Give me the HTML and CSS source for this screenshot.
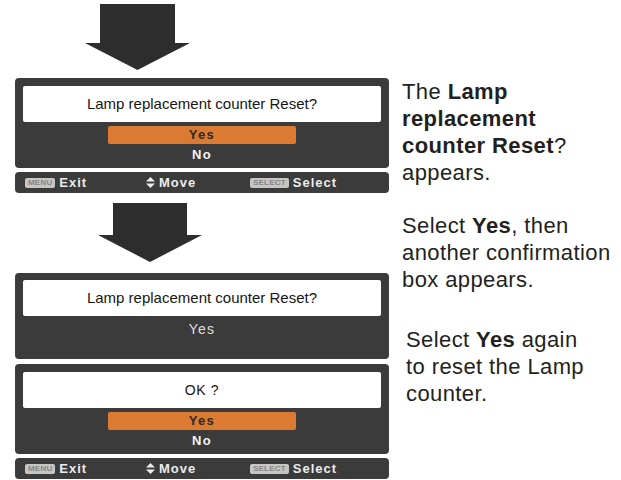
FILE: index.html
```html
<!DOCTYPE html>
<html>
<head>
  <meta name="viewport" content="width=device-width, initial-scale=1.0">
  <link rel="stylesheet" href="styles.css">
</head>

<body>
  <div class="page">
    <div class="steps">
      <svg class="arrow first" width="105" height="66" viewBox="0 0 105 66">
        <polygon points="15,0 90,0 90,39 105,39 52.5,66 0,39 15,39" />
      </svg>

      <div class="panel">
        <div class="msg">Lamp replacement counter Reset?</div>
        <div class="opts">
          <div class="opt on">Yes</div>
          <div class="opt">No</div>
        </div>
      </div>

      <div class="guide">
        <div class="g-item"><span class="key">MENU</span>Exit</div>
        <div class="g-item">
          <svg class="updown" width="9" height="11" viewBox="0 0 9 11">
            <polygon points="4.5,0 9,4.6 0,4.6" />
            <polygon points="0,6.4 9,6.4 4.5,11" />
          </svg>Move
        </div>
        <div class="g-item"><span class="key">SELECT</span>Select</div>
      </div>

      <svg class="arrow second" width="104" height="59" viewBox="0 0 104 59">
        <polygon points="15,0 89,0 89,32 104,32 52,59 0,32 15,32" />
      </svg>

      <div class="panel tall">
        <div class="msg">Lamp replacement counter Reset?</div>
        <div class="opts">
          <div class="opt plain">Yes</div>
        </div>
      </div>

      <div class="panel next">
        <div class="msg ok">OK ?</div>
        <div class="opts">
          <div class="opt on">Yes</div>
          <div class="opt">No</div>
        </div>
      </div>

      <div class="guide">
        <div class="g-item"><span class="key">MENU</span>Exit</div>
        <div class="g-item">
          <svg class="updown" width="9" height="11" viewBox="0 0 9 11">
            <polygon points="4.5,0 9,4.6 0,4.6" />
            <polygon points="0,6.4 9,6.4 4.5,11" />
          </svg>Move
        </div>
        <div class="g-item"><span class="key">SELECT</span>Select</div>
      </div>
    </div>

    <div class="notes">
      <p>The <b>Lamp<br>replacement<br>counter Reset</b>?<br>appears.</p>
      <p class="second">Select <b>Yes</b>, then<br>another confirmation<br>box appears.</p>
      <p class="third">Select <b>Yes</b> again<br>to reset the Lamp<br>counter.</p>
    </div>
  </div>
</body>
</html>
```

FILE: styles.css
```css
body {
  margin: 0;
  background-color: #ffffff;
}

.page {
  display: flex;
}

.steps {
  width: 390px;
  padding-top: 4px;
}

.arrow {
  display: block;
  fill: #2d2d2d;
}

.arrow.first {
  margin-left: 85px;
}

.arrow.second {
  margin-top: 10px;
  margin-left: 98px;
}

.panel {
  margin-left: 15px;
  width: 374px;
  box-sizing: border-box;
  padding: 8px 8px 4px;
  background-color: #3b3b3b;
  border-radius: 4px;
  margin-top: 8px;
}

.panel.tall {
  margin-top: 11px;
  padding-top: 7px;
  padding-bottom: 21px;
}

.panel.next {
  margin-top: 5px;
}

.msg {
  height: 36px;
  line-height: 36px;
  background-color: #ffffff;
  border-radius: 2px;
  text-align: center;
  font-family: "Liberation Sans", Arial, sans-serif;
  font-size: 15px;
  color: #161616;
}

.msg.ok {
  font-size: 14px;
  letter-spacing: 0.6px;
}

.opts {
  margin-top: 4px;
  display: flex;
  flex-direction: column;
  gap: 2px;
}

.opt {
  width: 188px;
  height: 18px;
  line-height: 18px;
  margin: 0 auto;
  text-align: center;
  font-family: "Liberation Sans", Arial, sans-serif;
  font-weight: bold;
  font-size: 13px;
  letter-spacing: 1.3px;
  color: #f2f2f2;
  border-radius: 2px;
}

.opt.on {
  background-color: #dc7a32;
  color: #2a2a2a;
}

.opt.plain {
  font-weight: normal;
  font-size: 14px;
  color: #dedede;
}

.guide {
  margin: 4px 0 0 15px;
  width: 374px;
  height: 21px;
  box-sizing: border-box;
  padding-left: 10px;
  background-color: #3b3b3b;
  border-radius: 4px;
  display: grid;
  grid-template-columns: 121px 104px 1fr;
  align-items: center;
  font-family: "Liberation Sans", Arial, sans-serif;
  font-weight: bold;
  font-size: 13px;
  letter-spacing: 1px;
  color: #ececec;
}

.g-item {
  display: flex;
  align-items: center;
  gap: 4px;
}

.key {
  display: inline-block;
  background-color: #c6c6c6;
  color: #858585;
  font-size: 8px;
  line-height: 10px;
  padding: 0 3px;
  border-radius: 2px;
  letter-spacing: 0.2px;
}

.updown {
  fill: #ececec;
}

.notes {
  margin-left: 12px;
  padding-top: 78px;
  font-family: "Liberation Sans", Arial, sans-serif;
  font-size: 22px;
  line-height: 27px;
  letter-spacing: 0.4px;
  color: #231f20;
}

.notes p {
  margin: 0;
}

.notes p.second {
  margin-top: 26px;
}

.notes p.third {
  margin-top: 33px;
  padding-left: 4px;
}
```
